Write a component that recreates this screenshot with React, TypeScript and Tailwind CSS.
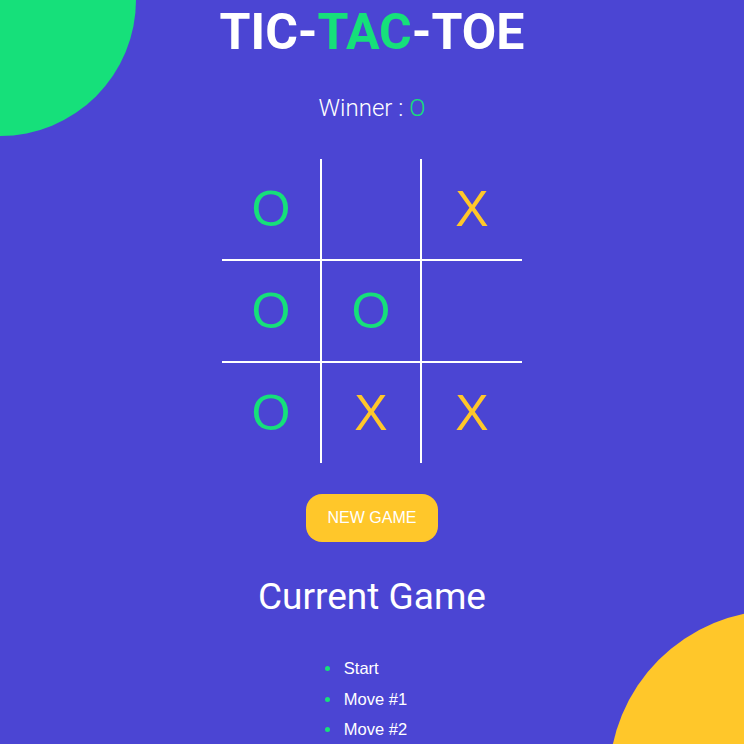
import React from "react";

const board: ("X" | "O" | "")[] = ["O", "", "X", "O", "O", "", "O", "X", "X"];
const moves = ["Start", "Move #1", "Move #2"];

export default function App() {
  return (
    <div className="relative min-h-screen w-full overflow-hidden bg-[#4b45d3] font-['Roboto',sans-serif] text-white">
      {/* decorative blobs */}
      <div className="absolute -left-[136px] -top-[136px] h-[272px] w-[272px] rounded-full bg-[#16e07a]" />
      <div className="absolute left-[609px] top-[610px] h-[340px] w-[340px] rounded-full bg-[#ffc72a]" />

      <div className="relative flex flex-col items-center">
        <h1 className="mt-[7px] text-[50px] font-bold leading-none">
          TIC-<span className="text-[#16e07a]">TAC</span>-TOE
        </h1>

        <p className="mt-[39px] text-[24px] font-light leading-none">
          Winner : <span className="text-[#16e07a]">O</span>
        </p>

        <div className="mt-[39px] grid w-[300px] grid-cols-3">
          {board.map((v, i) => {
            const col = i % 3;
            const row = Math.floor(i / 3);
            return (
              <div
                key={i}
                className={clsxLite(
                  "flex w-[100px] items-center justify-center border-white font-['Liberation_Sans',sans-serif] text-[50px] leading-none",
                  col < 2 ? "border-r-2" : "",
                  row < 2 ? "h-[102px] border-b-2" : "h-[100px]",
                  v === "O" ? "text-[#16e07a]" : "text-[#ffc72a]"
                )}
              >
                {v}
              </div>
            );
          })}
        </div>

        <button className="mt-[31px] h-12 rounded-2xl bg-[#ffc72a] px-[22px] font-['Liberation_Sans',sans-serif] text-base text-white">
          NEW GAME
        </button>

        <h2 className="mt-[36px] text-[37px] font-normal leading-none">Current Game</h2>

        <ul className="mt-[38px] list-disc pl-[5px] font-['Liberation_Sans',sans-serif] text-[16.5px] leading-[30.5px] marker:text-[#16e07a]">
          {moves.map((m) => (
            <li key={m} className="pl-[2px]">
              {m}
            </li>
          ))}
        </ul>
      </div>
    </div>
  );
}

function clsxLite(...c: string[]) {
  return c.filter(Boolean).join(" ");
}
